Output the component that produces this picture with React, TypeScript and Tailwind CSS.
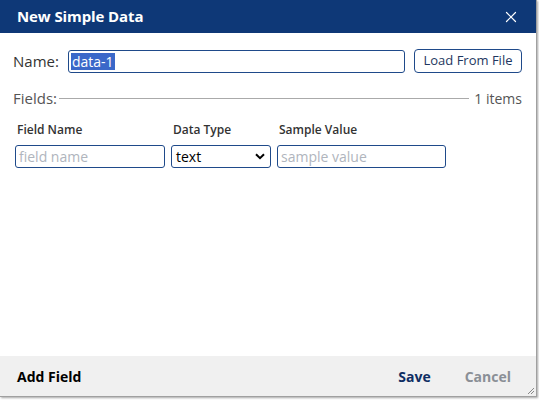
import { X } from 'lucide-react';

export default function App() {
  return (
    <div className="w-[539px] h-[400px] bg-white relative overflow-hidden" style={{ fontFamily: '"Open Sans", "Noto Sans", sans-serif' }}>
      <div className="w-[537px] h-[397px] flex flex-col bg-white border-r border-b border-[#a0a0a0] shadow-[1px_1px_2px_rgba(0,0,0,0.35)]">
        {/* header */}
        <div className="h-[33px] bg-[#0e3877] flex items-center justify-between pl-[17px] pr-[16px] shrink-0">
          <span className="text-white font-bold text-[15px] tracking-[-0.1px]">New Simple Data</span>
          <X className="w-[18px] h-[18px] text-white" strokeWidth={1.6} />
        </div>

        <div className="flex-1 px-[13px]">
          {/* name row */}
          <div className="flex items-center mt-[16px] h-[24px]">
            <span className="text-[15px] text-[#333] w-[55px]">Name:</span>
            <div className="w-[337px] h-[23px] border border-[#1f4a8a] rounded-[3px] flex items-center px-[2px]">
              <span className="bg-[#3a68c9] text-white text-[14px] leading-[17px] px-[1px]">data-1</span>
            </div>
            <button className="ml-[9px] h-[24px] w-[108px] border border-[#1f4a8a] rounded-[4px] text-[13px] text-[#1e3760] bg-white">
              Load From File
            </button>
          </div>

          {/* fields divider */}
          <div className="flex items-center mt-[13px] h-[24px] text-[15px] text-[#555]">
            <span>Fields:</span>
            <div className="flex-1 h-px bg-[#aaa] mx-[2px]" />
            <span className="text-[14px] text-[#555] pl-[3px] pr-[1px]">1 items</span>
          </div>

          {/* column headers */}
          <div className="flex mt-[11px] text-[12px] font-semibold text-[#333] h-[18px] items-center">
            <span className="w-[156px] pl-[4px]">Field Name</span>
            <span className="w-[106px] pl-[4px]">Data Type</span>
            <span className="pl-[4px]">Sample Value</span>
          </div>

          {/* field row */}
          <div className="flex mt-[6px] gap-[6px] pl-[2px]">
            <div className="w-[150px] h-[23px] border border-[#1f4a8a] rounded-[3px] flex items-center px-[3px] text-[14px] text-[#b0b5bd]">
              field name
            </div>
            <div className="w-[100px] h-[23px] border border-[#1f4a8a] rounded-[3px] flex items-center justify-between pl-[4px] pr-[5px] text-[14px] text-black">
              <span>text</span>
              <svg width="10" height="7" viewBox="0 0 10 7">
                <path d="M1 1.2 L5 5.2 L9 1.2" stroke="#000" strokeWidth="2" fill="none" />
              </svg>
            </div>
            <div className="w-[169px] h-[23px] border border-[#1f4a8a] rounded-[3px] flex items-center px-[3px] text-[14px] text-[#b0b5bd]">
              sample value
            </div>
          </div>
        </div>

        {/* footer */}
        <div className="h-[40px] bg-[#f0f0f0] flex items-center px-[17px] shrink-0 relative">
          <span className="text-[14px] font-bold text-black">Add Field</span>
          <div className="flex-1" />
          <span className="text-[14px] font-bold text-[#0e2e63] mr-[34px]">Save</span>
          <span className="text-[14px] font-bold text-[#8a8f96] mr-[8px]">Cancel</span>
          <svg className="absolute right-[1px] bottom-[1px]" width="8" height="8" viewBox="0 0 8 8">
            <path d="M7 1 L1 7 M7 4 L4 7" stroke="#888" strokeWidth="1" />
          </svg>
        </div>
      </div>
    </div>
  );
}
